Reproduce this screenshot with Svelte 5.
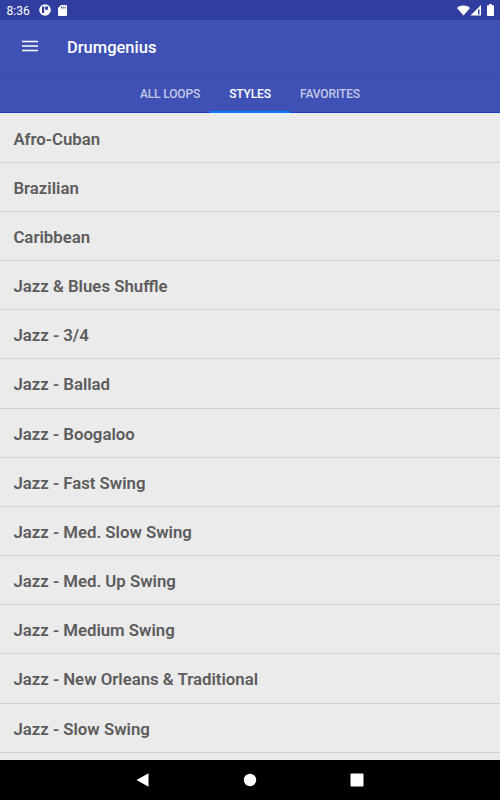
<script lang="ts">
  const tabs = ['All Loops', 'Styles', 'Favorites'];

  const styles = [
    'Afro-Cuban',
    'Brazilian',
    'Caribbean',
    'Jazz & Blues Shuffle',
    'Jazz - 3/4',
    'Jazz - Ballad',
    'Jazz - Boogaloo',
    'Jazz - Fast Swing',
    'Jazz - Med. Slow Swing',
    'Jazz - Med. Up Swing',
    'Jazz - Medium Swing',
    'Jazz - New Orleans & Traditional',
    'Jazz - Slow Swing',
  ];

  let active = $state('Styles');
</script>

<div class="screen">
  <div class="status">
    <span class="clock">8:36</span>
    <svg class="notif" width="12" height="12" viewBox="0 0 12 12">
      <circle cx="6" cy="6" r="5.8" fill="#fff" />
      <path d="M3 2.5h2.2V9H3zM6 2.500h3v3.200H6z" fill="#303f9f" />
    </svg>
    <svg class="sd" width="9" height="11" viewBox="0 0 9 11">
      <path d="M3 0h5a1 1 0 0 1 1 1v9a1 1 0 0 1-1 1H1a1 1 0 0 1-1-1V3z" fill="#fff" />
      <path d="M3 1.400h.9v2H3zM4.800 1.400h.9v2h-.9zM6.600 1.400h.9v2h-.9z" fill="#303f9f" />
    </svg>
    <div class="system">
      <svg width="13" height="11" viewBox="0 0 13 11">
        <path d="M0 3C3.500-.2 9.500-.2 13 3L6.500 10.500z" fill="#fff" />
      </svg>
      <svg width="12" height="11" viewBox="0 0 12 11">
        <path d="M11 0v10.500H.5z" fill="#fff" />
        <path d="M8 4.500h1.500v5H8z" fill="#303f9f" />
      </svg>
      <svg class="battery" width="7" height="12" viewBox="0 0 7 12">
        <path d="M2.200 0h2.600v1.200h1.500a.7.7 0 0 1 .7.7v9.400a.7.7 0 0 1-.7.7H.7a.7.7 0 0 1-.7-.7V1.900a.7.7 0 0 1 .7-.7h1.500z" fill="#fff" />
      </svg>
    </div>
  </div>

  <header class="toolbar">
    <button class="menu" aria-label="Menu">
      <svg width="16" height="12" viewBox="0 0 16 12">
        <path d="M0 1.500h16M0 6h16M0 10.500h16" stroke="#fff" stroke-width="1.700" />
      </svg>
    </button>
    <h1>Drumgenius</h1>
  </header>

  <nav class="tabs">
    {#each tabs as tab}
      <button class="tab" class:active={tab === active} onclick={() => (active = tab)}>{tab}</button>
    {/each}
  </nav>

  <ul class="list">
    {#each styles as style}
      <li>{style}</li>
    {/each}
  </ul>

  <div class="navbar">
    <svg width="14" height="14" viewBox="0 0 14 14">
      <path d="M12.500.2v13.600L.5 7z" fill="#fff" />
    </svg>
    <svg width="14" height="14" viewBox="0 0 14 14">
      <circle cx="7" cy="7" r="6.200" fill="#fff" />
    </svg>
    <svg width="14" height="14" viewBox="0 0 14 14">
      <rect x=".5" y=".5" width="13" height="13" rx="1" fill="#fff" />
    </svg>
  </div>
</div>

<style>
  :global(body) {
    margin: 0;
  }
  .screen {
    display: flex;
    flex-direction: column;
    width: 500px;
    height: 800px;
    overflow: hidden;
    background: #ebebeb;
    font-family: Roboto, sans-serif;
  }
  button {
    padding: 0;
    border: 0;
    background: none;
    font-family: inherit;
  }
  .status {
    display: flex;
    align-items: center;
    flex: none;
    box-sizing: border-box;
    height: 20px;
    padding: 0 6px;
    background: #303f9f;
    color: #fff;
  }
  .clock {
    width: 33px;
    padding-top: 1px;
    font-size: 12px;
    line-height: 20px;
    text-indent: 0.5px;
  }
  .sd {
    margin-left: 7px;
  }
  .system {
    display: flex;
    align-items: center;
    margin-left: auto;
  }
  .battery {
    margin-left: 5px;
  }
  .toolbar {
    display: flex;
    align-items: center;
    flex: none;
    box-sizing: border-box;
    height: 53px;
    padding-left: 22px;
    border-bottom: 1px solid #3b4cab;
    background: #3f51b5;
  }
  .menu {
    display: flex;
    width: 45px;
  }
  h1 {
    margin: 4px 0 0;
    color: #fff;
    font-size: 16.5px;
    font-weight: 500;
    line-height: 20px;
  }
  .tabs {
    display: flex;
    justify-content: center;
    flex: none;
    box-sizing: border-box;
    height: 40px;
    border-bottom: 1px solid #1f3fc0;
    background: #3f51b5;
  }
  .tab {
    box-sizing: border-box;
    width: 80px;
    margin-bottom: -1px;
    padding-top: 3px;
    border-bottom: 2px solid transparent;
    color: rgba(255, 255, 255, 0.7);
    font-size: 12px;
    font-weight: 500;
    letter-spacing: -0.15px;
    text-transform: uppercase;
    white-space: nowrap;
  }
  .tab.active {
    border-bottom-color: #0a7cff;
    color: #fff;
  }
  .list {
    flex: 1;
    min-height: 0;
    margin: 0;
    padding: 0.7px 0 0;
    overflow: hidden;
    list-style: none;
  }
  li {
    box-sizing: border-box;
    height: 49.17px;
    padding-left: 13.4px;
    border-bottom: 1px solid #d2d2d2;
    color: #5c5c5c;
    font-size: 16.8px;
    font-weight: 600;
    line-height: 51px;
    white-space: nowrap;
  }
  .navbar {
    display: flex;
    align-items: center;
    justify-content: center;
    gap: 93px;
    flex: none;
    height: 40px;
    background: #000;
  }
</style>
